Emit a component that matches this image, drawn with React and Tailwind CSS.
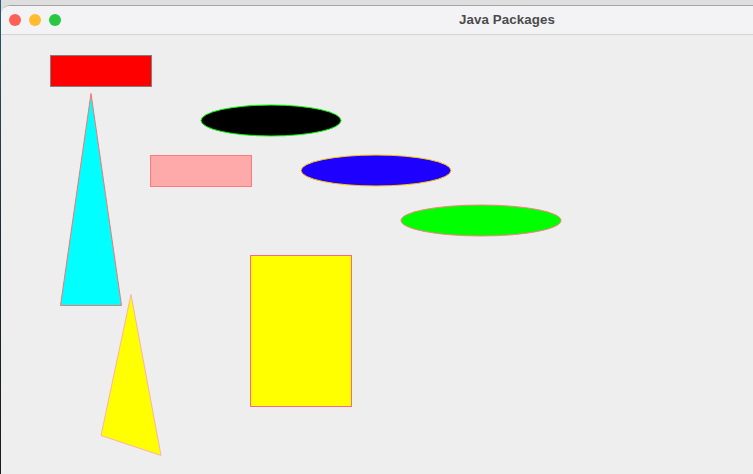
export default function App() {
  return (
    <div className="w-[753px] h-[474px] overflow-hidden bg-[#dedede] flex flex-col" style={{ fontFamily: '"Liberation Sans", Arial, sans-serif' }}>
      <div className="h-[5px] shrink-0 flex">
        <div className="w-[1px] bg-[#2c5a6e]" />
        <div className="flex-1 bg-[#dedede]" />
      </div>
      <div className="flex flex-1 min-h-0">
        <div className="w-[1px] shrink-0 bg-gradient-to-b from-[#2c5a6e] via-[#1c2a30] to-[#1a1a1a]" />
        <div className="flex-1 flex flex-col rounded-tl-[9px] overflow-hidden border-t border-[#a3a3a3] bg-[#eeeeee]">
          <div className="h-[29px] shrink-0 bg-[#f3f3f5] border-b border-[#d4d4d4] flex items-center pl-[8px]">
            <div className="flex gap-[8px]">
              <div className="w-[12px] h-[12px] rounded-full bg-[#fe5f57]" />
              <div className="w-[12px] h-[12px] rounded-full bg-[#febc2e]" />
              <div className="w-[12px] h-[12px] rounded-full bg-[#28c840]" />
            </div>
            <div className="ml-[398px] text-[13.3px] font-bold text-[#4b4b4b] leading-none tracking-[0.1px] -mt-[1px]">Java Packages</div>
          </div>
          <div className="flex-1 min-h-0">
            <svg width="752" height="439" viewBox="1 35 752 439" className="block">
              <rect x="50.5" y="55.5" width="101" height="31" fill="#ff0000" stroke="#808080" />
              <ellipse cx="271" cy="120.5" rx="70" ry="15.5" fill="#000000" stroke="#00ff00" />
              <rect x="150.5" y="155.5" width="101" height="31" fill="#ffaaaa" stroke="#ff7b7b" />
              <ellipse cx="376" cy="170.5" rx="75" ry="15.5" fill="#1e00ff" stroke="#ffc800" />
              <ellipse cx="481" cy="220.5" rx="80" ry="15.5" fill="#00ff00" stroke="#ff8080" />
              <polygon points="91,93.5 60.5,305.5 121.5,305.5" fill="#00ffff" stroke="#ff7070" />
              <rect x="250.5" y="255.5" width="101" height="151" fill="#ffff00" stroke="#ff6680" />
              <polygon points="131,294.5 101,435.5 161,455.5" fill="#ffff00" stroke="#ffb0b0" />
            </svg>
          </div>
        </div>
      </div>
    </div>
  );
}
